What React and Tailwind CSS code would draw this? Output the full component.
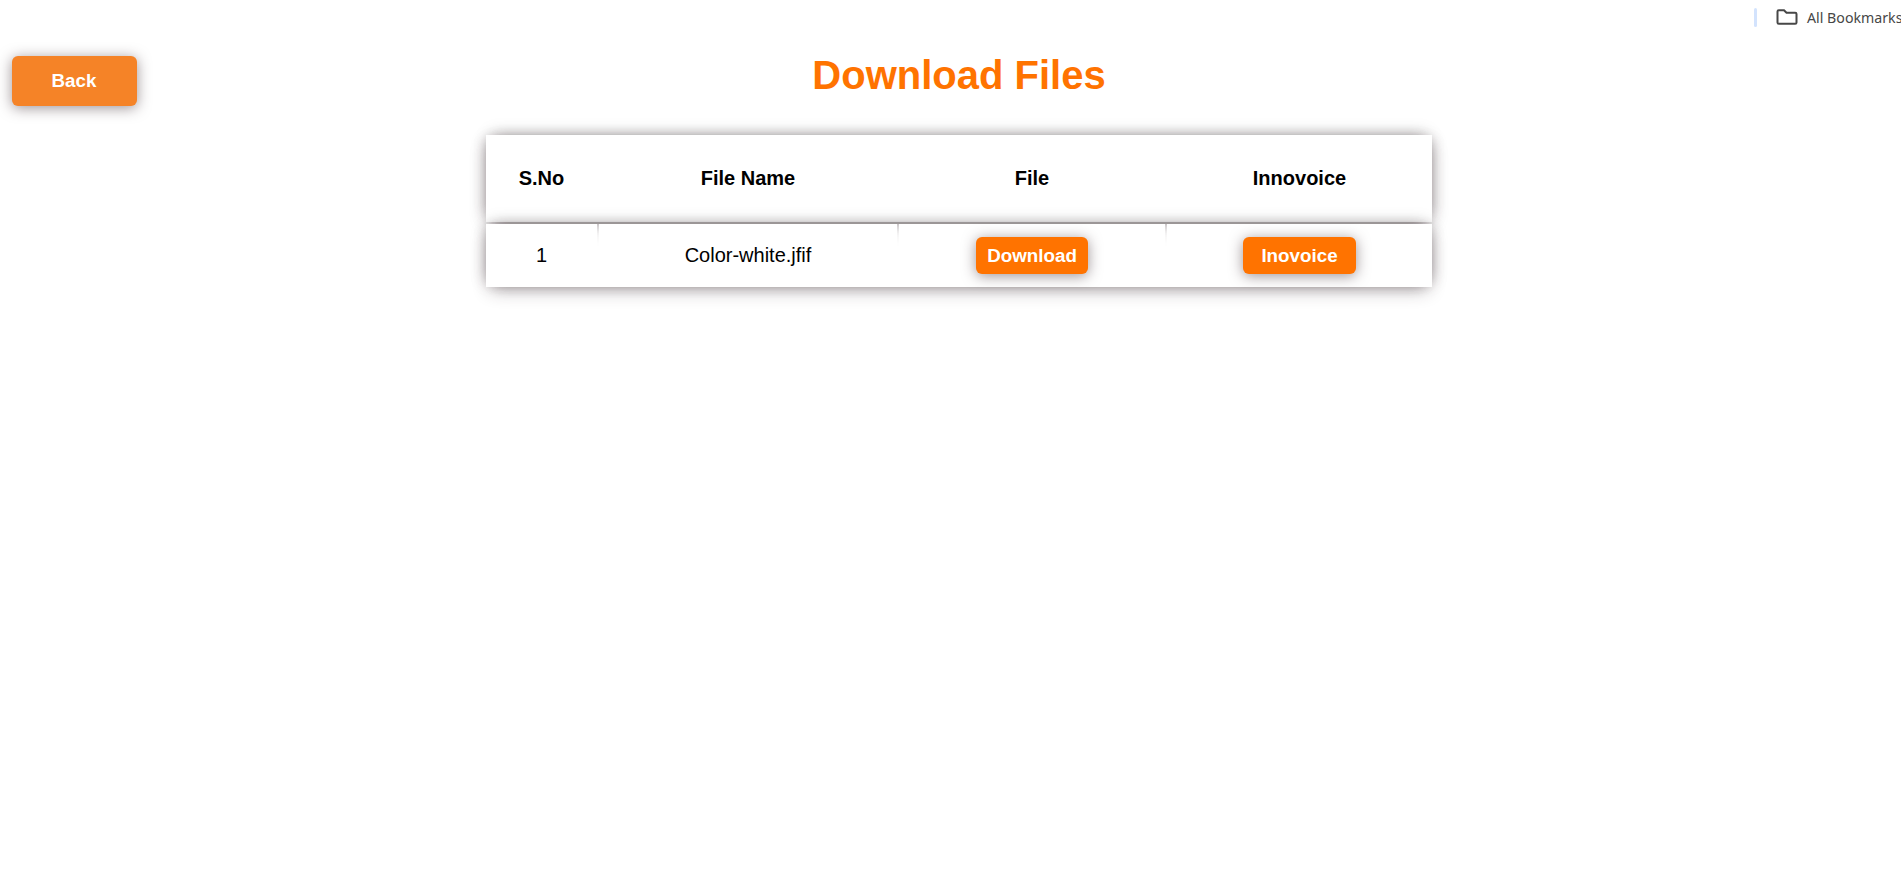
const shadow = "shadow-[0_2px_14px_rgba(60,40,45,0.5)]";

function Row({ className, children }) {
  return (
    <div
      className={`isolate grid grid-cols-[111px_298px_266px_265px] gap-x-[2px] shadow-[0_-5px_16px_-5px_rgba(0,0,0,0.22),0_7px_18px_-4px_rgba(50,35,40,0.32),5px_0_14px_-5px_rgba(60,40,45,0.28),-5px_0_14px_-5px_rgba(60,40,45,0.28)] *:flex *:items-center *:justify-center *:bg-white *:pb-[2px] ${className}`}
    >
      {children}
    </div>
  );
}

function ActionButton({ className, children }) {
  return (
    <button
      className={`mt-[2px] h-[37px] rounded-md bg-[#ff7300] pt-px text-[18.8px] font-bold text-white ${shadow} ${className}`}
    >
      {children}
    </button>
  );
}

export default function App() {
  return (
    <div className="h-[886px] overflow-hidden bg-white font-['Liberation_Sans',Arial,sans-serif] text-black">
      <div className="mb-[2px] flex h-[34px] items-center justify-end">
        <div className="h-[19px] w-[3px] rounded-sm bg-[#d3e3fd]" />
        <svg className="ml-[19px] h-4 w-[22px]" viewBox="0 0 22 16" fill="none" stroke="#474747" strokeWidth="2">
          <path d="M1.5 2.500q0-1.300 1.300-1.300h5.200l2.500 2.600h8.700q1.300 0 1.300 1.300v8.400q0 1.300-1.300 1.300h-16.400q-1.300 0-1.300-1.300z" />
        </svg>
        <span className="ml-[9px] w-[94px] whitespace-nowrap pt-[2px] font-['Noto_Sans',sans-serif] text-[14.200px] text-[#474747]">
          All Bookmarks
        </span>
      </div>
      <header className="grid grid-cols-[1fr_auto_1fr] items-start px-3">
        <button className={`mt-5 h-[50px] w-[125px] rounded-md bg-[#f58327] pr-[1px] text-[18.8px] font-bold text-white ${shadow}`}>
          Back
        </button>
        <h1 className="ml-[17px] mt-4 text-[40px] font-bold leading-[46px] text-[#ff7300]">Download Files</h1>
      </header>
      <main className="ml-[486px] mt-[29px] w-[946px]">
        <Row className="h-[87px] text-[20px] font-bold">
          <div>S.No</div>
          <div>File Name</div>
          <div>File</div>
          <div>Innovoice</div>
        </Row>
        <Row className="mt-[2px] h-[63px] text-[20px]">
          <div>1</div>
          <div>Color-white.jfif</div>
          <div>
            <ActionButton className="w-[112px]">Download</ActionButton>
          </div>
          <div>
            <ActionButton className="w-[113px]">Inovoice</ActionButton>
          </div>
        </Row>
      </main>
    </div>
  );
}
